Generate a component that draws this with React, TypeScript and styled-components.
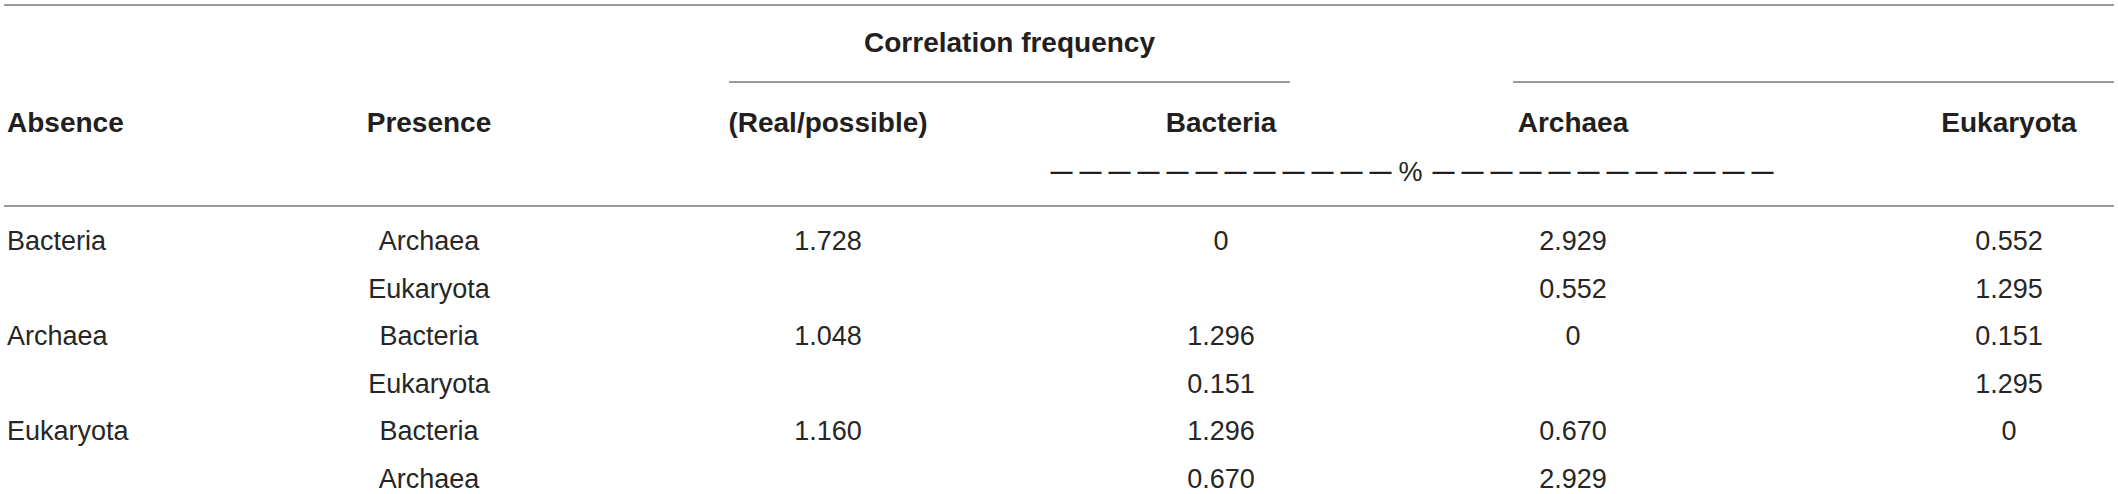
import React from "react";
import styled, { createGlobalStyle } from "styled-components";

const GlobalStyle = createGlobalStyle`
  html, body { margin: 0; padding: 0; background: #ffffff; }
  body {
    font-family: "Liberation Sans", Arial, Helvetica, sans-serif;
    color: #231f20;
  }
`;

const COLS = "224px 402px 396px 371px 394px 323px";
const RULE = "#9a9a9a";
const colPad = ["0 0 0 3px", "0", "0", "0 0 0 19px", "0 42px 0 0", "0 0 0 113px"];

const Table = styled.div`
  margin: 4px 0 0 4px;
  width: 2110px;
  border-top: 2px solid ${RULE};
`;

const GroupRow = styled.div`
  display: grid;
  grid-template-columns: ${COLS};
  height: 77px;
`;

const Group = styled.div<{ $from: number; $to: number; $inset: string }>`
  grid-column: ${(p) => p.$from} / ${(p) => p.$to};
  margin: ${(p) => p.$inset};
  border-bottom: 2px solid ${RULE};
  display: flex;
  align-items: center;
  justify-content: center;
  font-size: 28px;
  font-weight: 700;
  padding-bottom: 2px;
`;

const HeadRow = styled.div`
  display: grid;
  grid-template-columns: ${COLS};
  height: 70px;
  box-sizing: border-box;
  padding-top: 10px;
  align-items: center;
  font-size: 28px;
  font-weight: 700;
`;

const UnitRow = styled.div`
  display: grid;
  grid-template-columns: ${COLS};
  height: 54px;
  box-sizing: border-box;
  border-bottom: 2px solid ${RULE};
`;

const UnitLine = styled.div`
  grid-column: 4 / 6;
  margin-top: 4px;
  height: 30px;
  display: flex;
  align-items: center;
  justify-content: center;
  padding-left: 14px;
  white-space: nowrap;
`;

const Dashes = styled.span`
  font-size: 22px;
  font-weight: 700;
  letter-spacing: 7px;
  line-height: 30px;
  color: #231f20;
`;

const Percent = styled.span`
  font-size: 27px;
  font-weight: 400;
  line-height: 30px;
  margin-right: 10px;
`;

const Body = styled.div`
  padding-top: 11px;
`;

const BodyRow = styled.div`
  display: grid;
  grid-template-columns: ${COLS};
  height: 47.5px;
  align-items: center;
  font-size: 27px;
  color: #262626;
`;

const Cell = styled.div<{ $col: number }>`
  text-align: ${(p) => (p.$col === 0 ? "left" : "center")};
  padding: ${(p) => colPad[p.$col]};
  white-space: nowrap;
`;

const headers = ["Absence", "Presence", "(Real/possible)", "Bacteria", "Archaea", "Eukaryota"];

const rows: string[][] = [
  ["Bacteria", "Archaea", "1.728", "0", "2.929", "0.552"],
  ["", "Eukaryota", "", "", "0.552", "1.295"],
  ["Archaea", "Bacteria", "1.048", "1.296", "0", "0.151"],
  ["", "Eukaryota", "", "0.151", "", "1.295"],
  ["Eukaryota", "Bacteria", "1.160", "1.296", "0.670", "0"],
  ["", "Archaea", "", "0.670", "2.929", ""],
];

export default function App() {
  return (
    <>
      <GlobalStyle />
      <Table>
        <GroupRow>
          <Group $from={3} $to={5} $inset="0 107px 0 99px">Correlation frequency</Group>
          <Group $from={5} $to={7} $inset="0 0 0 116px" />
        </GroupRow>
        <HeadRow>
          {headers.map((h, i) => (
            <Cell key={h} $col={i}>{h}</Cell>
          ))}
        </HeadRow>
        <UnitRow>
          <UnitLine>
            <Dashes>{"—".repeat(12)}</Dashes>
            <Percent>%</Percent>
            <Dashes>{"—".repeat(12)}</Dashes>
          </UnitLine>
        </UnitRow>
        <Body>
          {rows.map((r, ri) => (
            <BodyRow key={ri}>
              {r.map((v, ci) => (
                <Cell key={ci} $col={ci}>{v}</Cell>
              ))}
            </BodyRow>
          ))}
        </Body>
      </Table>
    </>
  );
}
